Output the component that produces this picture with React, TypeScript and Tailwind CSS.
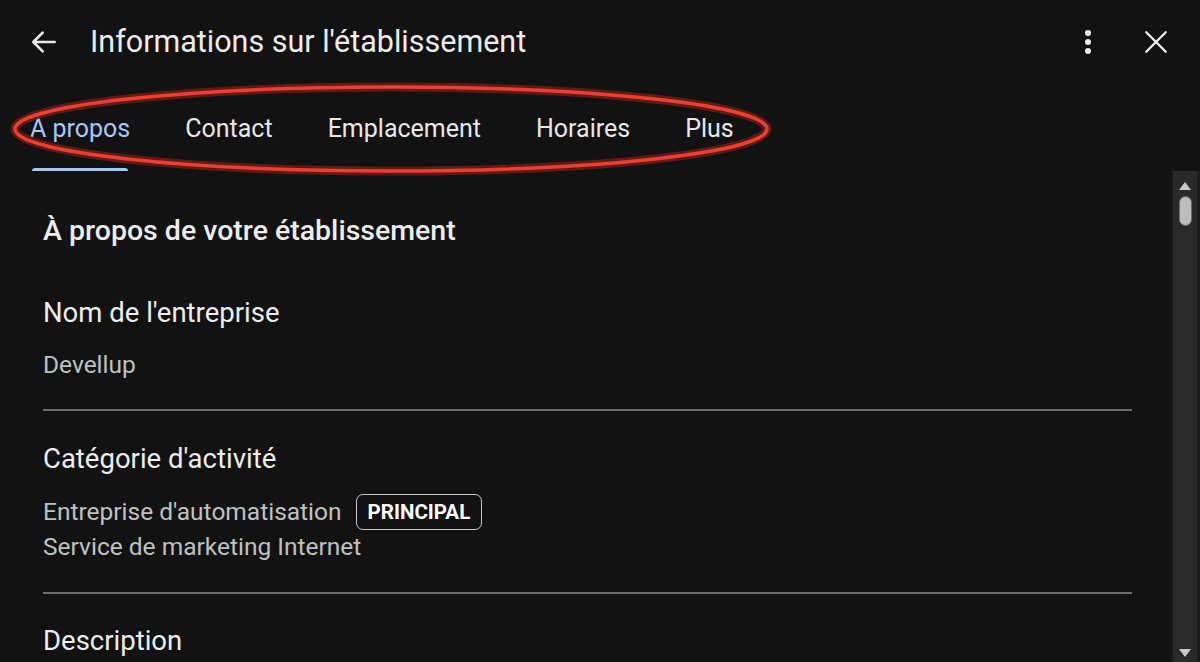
import React from "react";

const tabs = ["À propos", "Contact", "Emplacement", "Horaires", "Plus"];

export default function App() {
  return (
    <div
      className="relative w-[1200px] h-[662px] overflow-hidden bg-[#121212] text-[#e3e3e3] flex flex-col"
      style={{ fontFamily: "Roboto, 'Noto Sans', sans-serif" }}
    >
      {/* Header */}
      <div className="h-[84px] flex items-center shrink-0">
        <div className="w-[90px] flex justify-start pl-[28px]">
          <svg width="32" height="32" viewBox="0 0 24 24" fill="none">
            <path d="M20 12H4.5M11 5l-7 7 7 7" stroke="#e8e8e8" strokeWidth="2" strokeLinecap="round" strokeLinejoin="round" />
          </svg>
        </div>
        <div className="flex-1 text-[30.5px] leading-[36px] text-[#ececec]">Informations sur l'établissement</div>
        <div className="w-[40px] flex justify-center mr-[28px]">
          <svg width="8" height="26" viewBox="0 0 8 26">
            <circle cx="4" cy="4" r="3" fill="#efefef" />
            <circle cx="4" cy="13" r="3" fill="#efefef" />
            <circle cx="4" cy="22" r="3" fill="#efefef" />
          </svg>
        </div>
        <div className="w-[40px] flex justify-center mr-[24px]">
          <svg width="26" height="26" viewBox="0 0 24 24" fill="none">
            <path d="M3 3l18 18M21 3L3 21" stroke="#f0f0f0" strokeWidth="2.2" strokeLinecap="round" />
          </svg>
        </div>
      </div>

      {/* Tabs */}
      <div className="h-[87px] shrink-0 flex pl-[30px] gap-[55px]">
        {tabs.map((t, i) => (
          <div key={t} className="flex flex-col h-full">
            <div
              className={
                "pt-[31px] text-[25px] leading-[28px] whitespace-nowrap " +
                (i === 0 ? "text-[#a8c7fa]" : "text-[#e8e8e8]")
              }
            >
              {t}
            </div>
            <div className="mt-auto flex justify-center px-[2px]">
              {i === 0 ? <div className="h-[3px] w-full rounded-t-[3px] bg-[#a8c7fa]" /> : <div className="h-[3px]" />}
            </div>
          </div>
        ))}
      </div>

      {/* Body */}
      <div className="flex-1 flex min-h-0">
        <div className="flex-1 pl-[43px] pr-[40px] pt-[44px] overflow-hidden">
          <div className="text-[28.5px] leading-[32px] font-medium text-[#ededed] whitespace-nowrap">À propos de votre établissement</div>

          <div className="mt-[50px] text-[27.5px] leading-[32px] text-[#ededed]">Nom de l'entreprise</div>
          <div className="mt-[23px] text-[24.5px] leading-[26px] text-[#bfc1c1]">Devellup</div>
          <div className="mt-[31px] h-[2px] bg-[#6d6f6e]" />

          <div className="mt-[32px] text-[27.5px] leading-[32px] text-[#ededed]">Catégorie d'activité</div>
          <div className="mt-[19px] flex items-center gap-[14px]">
            <span className="text-[24.5px] leading-[26px] text-[#bfc1c1]">Entreprise d'automatisation</span>
            <span className="h-[36px] px-[11px] flex items-center rounded-[7px] border-[1.5px] border-[#c8c8c8] text-[20.5px] font-bold text-white">
              PRINCIPAL
            </span>
          </div>
          <div className="mt-[4px] text-[24.5px] leading-[26px] text-[#bfc1c1]">Service de marketing Internet</div>
          <div className="mt-[32px] h-[2px] bg-[#6d6f6e]" />

          <div className="mt-[31px] text-[27.5px] leading-[32px] text-[#ededed]">Description</div>
        </div>

        {/* Fake scrollbar */}
        <div className="w-[25px] shrink-0 bg-[#2a2a2a] border-l border-[#1a1a1a] flex flex-col items-center pt-[10px] pb-[4px]">
          <svg width="14" height="10" viewBox="0 0 14 10">
            <path d="M7 1L13 9H1z" fill="#c9c9c9" />
          </svg>
          <div className="mt-[5px] w-[13px] h-[30px] rounded-full bg-[#bdbdbd] border border-[#6a6a6a]" />
          <div className="mt-auto">
            <svg width="14" height="10" viewBox="0 0 14 10">
              <path d="M7 9L13 1H1z" fill="#c9c9c9" />
            </svg>
          </div>
        </div>
        <div className="w-[3px] shrink-0 bg-[#1c1c1c]" />
      </div>

      {/* Red annotation ellipse overlay */}
      <svg className="absolute left-0 top-0 pointer-events-none" width="1200" height="662">
        <ellipse cx="391" cy="129" rx="376" ry="42" fill="none" stroke="#6b1d18" strokeOpacity="0.85" strokeWidth="9" />
        <ellipse cx="391" cy="129" rx="376" ry="42" fill="none" stroke="#ee3e33" strokeWidth="3.5" />
      </svg>
    </div>
  );
}
